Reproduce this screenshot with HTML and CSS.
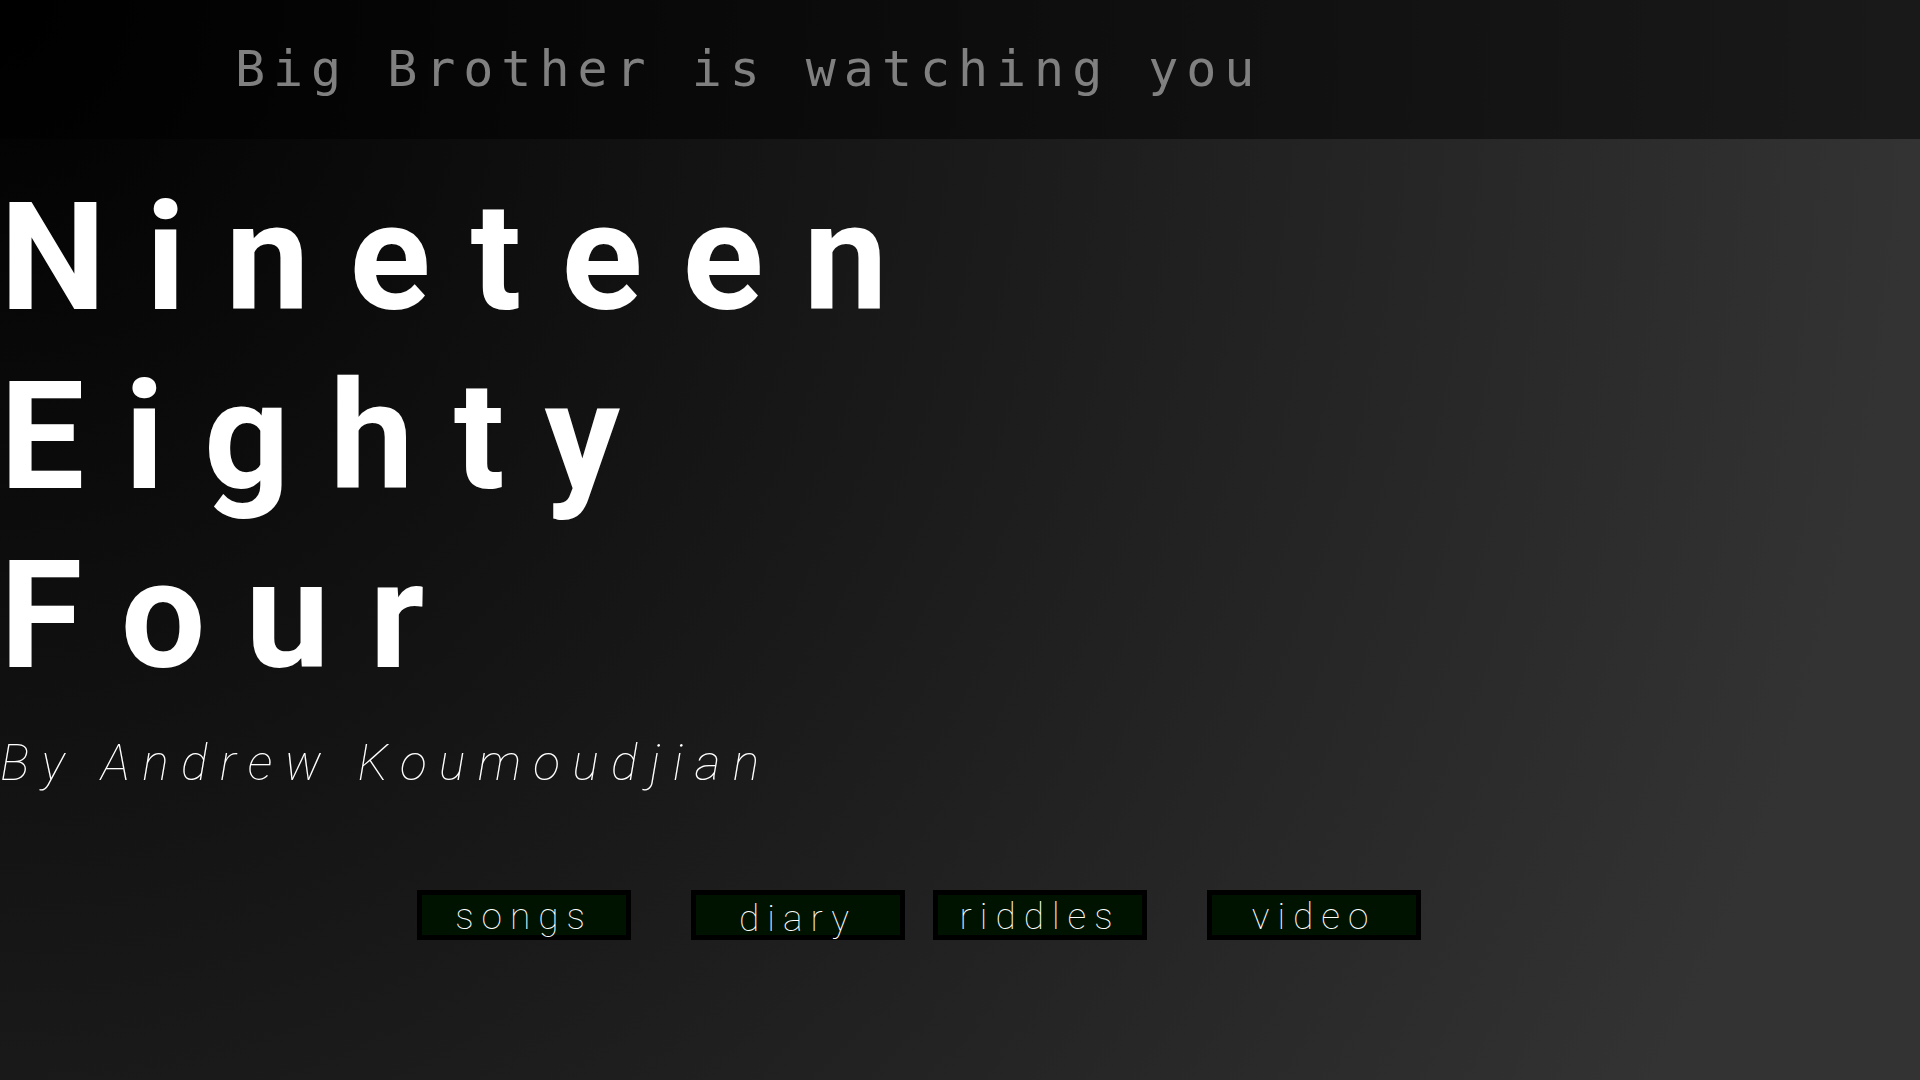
FILE: index.html
```html
<!DOCTYPE html>
<html lang="en">
<head>
<meta charset="utf-8">
<title>Nineteen Eighty Four</title>
<link rel="stylesheet" href="styles.css">
</head>
<body>
<header class="topbar">
  <p class="motto">Big Brother is watching you</p>
</header>
<main class="hero">
  <h1 class="title">
    <span class="title-line">Nineteen</span>
    <span class="title-line">Eighty</span>
    <span class="title-line">Four</span>
  </h1>
  <p class="byline">By Andrew Koumoudjian</p>
  <nav class="links">
    <a class="btn btn-songs" href="#songs">songs</a>
    <a class="btn btn-diary" href="#diary">diary</a>
    <a class="btn btn-riddles" href="#riddles">riddles</a>
    <a class="btn btn-video" href="#video">video</a>
  </nav>
</main>
</body>
</html>
```
FILE: styles.css
```css
html, body {
  margin: 0;
  padding: 0;
}
body {
  min-height: 100vh;
  background: radial-gradient(1920px 2160px at 0 0, #000000 0%, #333333 100%);
  background-color: #333;
  color: #fff;
  font-family: Roboto, "Liberation Sans", sans-serif;
}
.topbar {
  height: 139px;
  box-sizing: border-box;
  padding: 40px 0 0 235px;
  background: rgba(0, 0, 0, 0.5);
}
.motto {
  margin: 0;
  font-family: "DejaVu Sans Mono", monospace;
  font-size: 50px;
  letter-spacing: 7.95px;
  color: #808080;
  white-space: nowrap;
}
.hero {
  display: flex;
  flex-direction: column;
}
.title {
  margin: 30px 0 0 0;
  font-family: Roboto, "Liberation Sans", sans-serif;
  font-weight: 700;
  font-size: 150px;
  line-height: 179px;
  letter-spacing: 40px;
}
.title-line {
  display: block;
}
.byline {
  margin: 28px 0 0 0;
  font-family: Roboto, "Liberation Sans", sans-serif;
  font-style: italic;
  font-weight: 100;
  font-size: 50px;
  letter-spacing: 12.25px;
  white-space: nowrap;
}
.links {
  display: flex;
  margin-top: 98px;
  padding-left: 417px;
}
.btn {
  display: block;
  width: 204px;
  height: 40px;
  border: 5px solid #000;
  background: #001300;
  color: #fff;
  text-decoration: none;
  text-align: center;
  font-family: Roboto, "Liberation Sans", sans-serif;
  font-weight: 100;
  font-size: 37px;
  line-height: 43px;
  letter-spacing: 8px;
  white-space: nowrap;
  overflow: visible;
}
.btn-songs { margin-right: 60px; }
.btn-diary { margin-right: 28px; line-height: 47px; }
.btn-riddles { margin-right: 60px; }
```
